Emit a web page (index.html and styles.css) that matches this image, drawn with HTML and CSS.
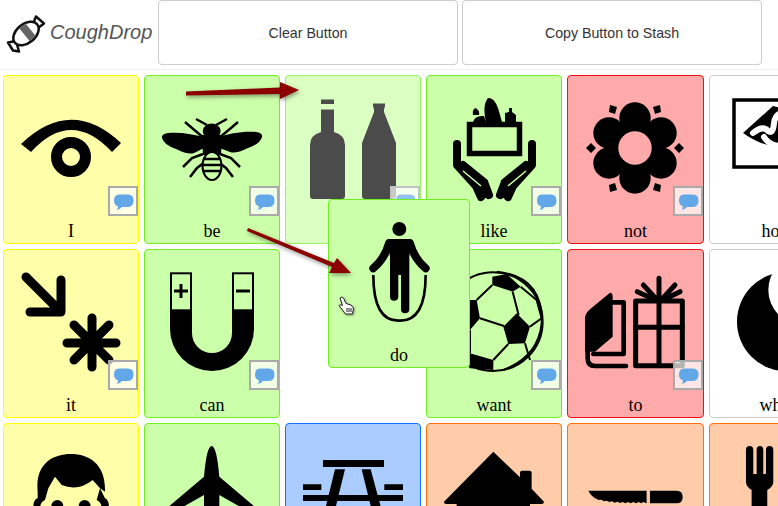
FILE: index.html
```html
<!DOCTYPE html>
<html lang="en">
<head>
    <meta charset="UTF-8">
    <meta name="viewport" content="width=device-width, initial-scale=1.0">
    <title>CoughDrop</title>
    <link rel="stylesheet" href="styles.css">
</head>
<body>
    <svg class="defs" width="0" height="0">
        <symbol id="bubble" viewBox="0 0 26 26">
            <path d="M9 6.5H18Q23.5 6.5 23.5 12.5Q23.5 19 18 19H12Q10 21.5 6.5 22Q8 20.5 8 18.5Q4 17 4 12.5Q4 6.5 9 6.5Z"/>
        </symbol>
    </svg>

    <header class="top-bar">
        <div class="logo">
            <svg class="logo-icon" width="48" height="48" viewBox="0 0 48 48">
                <path class="candy-line" d="M32 15L35 7.500L43 14.500L37 19Z"/>
                <path class="candy-line" d="M15 32L7 33.500L12 41.500L18 42.500Z"/>
                <ellipse class="candy-line" cx="25" cy="24.500" rx="14.500" ry="9.500" transform="rotate(-40 25 24.500)"/>
                <path class="candy-band" d="M18.400 19.600L24.500 14.500L34.700 26.900L28.600 32Z"/>
            </svg>
            <span class="logo-text">CoughDrop</span>
        </div>
        <button class="top-button">Clear Button</button>
        <button class="top-button">Copy Button to Stash</button>
    </header>

    <main class="board">
        <!-- row 1 -->
        <div class="cell yellow">
            <svg class="icon">
                <path d="M18 69Q68 21 118 68L109 77Q68 33 28 77Z"/>
                <circle class="ring" cx="68" cy="82" r="14.5"/>
            </svg>
            <span class="label">I</span>
            <div class="speak"><svg width="26" height="26"><use href="#bubble"/></svg></div>
        </div>
        <div class="cell green">
            <svg class="icon">
                <ellipse cx="67.700" cy="56" rx="9" ry="7.500"/>
                <path d="M58 60H78L77 80H59Z"/>
                <path d="M62 63C50 59 36 57 24 58Q17 59 18 63Q20 70 32 74Q44 80 50 78Q58 74 62 72Z"/>
                <path d="M73 63C85 58 100 56 112 57Q119 58 118 62Q116 69 104 73Q92 79 86 77Q78 74 73 72Z"/>
                <path class="bug-leg" d="M60 63L48 53L41 47M63 50L52 44M75 63L87 53L94 47M72 50L83 44M59 79L48 83L39 92M61 87L53 93L46 102M76 79L87 83L96 92M74 87L82 93L89 102"/>
                <ellipse class="bug-belly" cx="68" cy="91" rx="9.500" ry="14"/>
                <path class="bug-leg" d="M59 84H77M59 90H77M60 96H76"/>
            </svg>
            <span class="label">be</span>
            <div class="speak"><svg width="26" height="26"><use href="#bubble"/></svg></div>
        </div>
        <div class="cell green picked">
            <svg class="icon">
                <path d="M36 24.500H49V29H36ZM36 34.500H49V57Q60 60 60 70V121Q60 124 57 124H28Q25 124 25 121V70Q25 60 36 57Z"/>
                <path d="M88 28.500H100V31L99 34.500V37L111 68V121Q111 124 108 124H80Q77 124 77 121V68L89 37V34.500L88 31Z"/>
            </svg>
            <div class="speak"><svg width="26" height="26"><use href="#bubble"/></svg></div>
        </div>
        <div class="cell green">
            <svg class="icon">
                <rect class="crate" x="43.500" y="49.500" width="50" height="29"/>
                <path d="M60 47Q56 30 62 23Q68 22 72 33L76 47ZM79 47V38L83 37V33H86V37L90 40V47ZM47 47Q49 40 58 41L60 47ZM47 40Q46 34 50 33Q54 36 53 40Z"/>
                <path class="hand" d="M31 69V90L50 111L55 122M37 90L58 107L63 120M106 69V90L87 111L82 122M100 90L79 107L74 120"/>
                <path d="M48 108L62 105L63 123H52ZM89 108L75 105L74 123H85Z"/>
                <path class="hand-gap" d="M37 96L55 111M100 96L82 111"/>
            </svg>
            <span class="label">like</span>
            <div class="speak"><svg width="26" height="26"><use href="#bubble"/></svg></div>
        </div>
        <div class="cell red">
            <svg class="icon">
                <g transform="translate(1 0)">
                    <circle cx="67" cy="73" r="25"/>
                    <circle cx="67" cy="43" r="15.700"/>
                    <circle cx="67" cy="103" r="15.700"/>
                    <circle cx="41" cy="58" r="15.700"/>
                    <circle cx="93" cy="58" r="15.700"/>
                    <circle cx="41" cy="88" r="15.700"/>
                    <circle cx="93" cy="88" r="15.700"/>
                    <circle class="flower-hole" cx="67" cy="73" r="16.700"/>
                    <path d="M23 68L28 73L23 78L18 73ZM111 68L116 73L111 78L106 73ZM42 30L49 32L47 39L41 37ZM92 30L85 32L87 39L93 37ZM42 117L49 115L47 108L41 110ZM92 117L85 115L87 108L93 110Z"/>
                </g>
            </svg>
            <span class="label">not</span>
            <div class="speak"><svg width="26" height="26"><use href="#bubble"/></svg></div>
        </div>
        <div class="cell plain">
            <svg class="icon">
                <rect class="frame" x="25" y="25" width="86" height="67"/>
                <path d="M34 58L64 31L110 42V62Q70 84 34 58Z"/>
                <path class="squiggle" d="M44 58Q54 50 59 56Q64 60 65 48Q66 40 72 38M55 62Q60 70 70 71"/>
            </svg>
            <span class="label">how</span>
        </div>

        <!-- row 2 -->
        <div class="cell yellow">
            <svg class="icon">
                <path class="thick" d="M23 28L58 63M58 31V63H27"/>
                <path class="thick" d="M64 94H113M89 69V118M71 76L106 111M106 76L71 111"/>
            </svg>
            <span class="label">it</span>
            <div class="speak"><svg width="26" height="26"><use href="#bubble"/></svg></div>
        </div>
        <div class="cell green">
            <svg class="icon">
                <path d="M26 61H48V84A20 20 0 0 0 88 84V61H110V80A42 42 0 0 1 26 80Z"/>
                <rect class="pole" x="27" y="24.300" width="20" height="37"/>
                <rect class="pole" x="89" y="24.300" width="20" height="37"/>
                <path class="sign" d="M30 42H44M37 35V49M92 42H106"/>
            </svg>
            <span class="label">can</span>
            <div class="speak"><svg width="26" height="26"><use href="#bubble"/></svg></div>
        </div>
        <div class="cell-empty"></div>
        <div class="cell green">
            <svg class="icon">
                <g transform="translate(-146 -179) scale(.3333)">
                    <circle class="ball" cx="640" cy="755" r="148"/>
                    <path class="ball" d="M650 605Q790 620 785 760Q775 860 670 900"/>
                    <path d="M637 620L680 612L722 650L698 665L637 645ZM710 730L750 770L735 820L685 822L670 770ZM520 690L590 690L600 745L570 780L520 780ZM520 850L570 850L640 870L640 900L570 895Z"/>
                    <path class="ball" d="M637 645L590 690M698 665L716 735M600 745L672 768M750 770L785 745M722 650L770 690L785 745M735 820L750 870M685 822L640 870M570 780L570 850"/>
                </g>
            </svg>
            <span class="label">want</span>
            <div class="speak"><svg width="26" height="26"><use href="#bubble"/></svg></div>
        </div>
        <div class="cell red">
            <svg class="icon">
                <g transform="translate(-7 -179) scale(.3333)">
                    <path d="M150 668Q158 668 158 680V800L105 845H75V745Q75 730 90 718Z"/>
                    <path class="book" d="M158 697H191V852M83 840V865Q83 888 105 888H198M100 852H191"/>
                    <rect class="gift" x="227" y="693" width="140" height="194"/>
                    <path class="gift" d="M297 625V887M227 772H367M250 645L285 683M345 645L310 683M232 665L275 685M360 665L320 685"/>
                </g>
            </svg>
            <span class="label">to</span>
            <div class="speak"><svg width="26" height="26"><use href="#bubble"/></svg></div>
        </div>
        <div class="cell plain">
            <svg class="icon">
                <g transform="translate(-149 -179) scale(.3333)">
                    <circle cx="680" cy="755" r="149"/>
                    <circle class="moon-cut" cx="730" cy="660" r="105"/>
                </g>
            </svg>
            <span class="label">what</span>
        </div>

        <!-- row 3, cut off by the window -->
        <div class="cell yellow">
            <svg class="icon">
                <g transform="translate(-3 -3) scale(.3333)">
                    <path d="M113 215C105 130 160 102 212 102C270 102 318 135 315 215L300 205L278 180Q235 215 185 195L165 170L145 205L135 240Q122 245 120 262H100Q100 238 113 235ZM315 235Q327 240 327 262H305Q303 245 290 240L300 205Z"/>
                    <circle cx="172" cy="258" r="18"/>
                    <circle cx="254" cy="258" r="18"/>
                </g>
            </svg>
        </div>
        <div class="cell green">
            <svg class="icon">
                <g transform="translate(-144 -3) scale(.3333)">
                    <path d="M635 78Q650 78 658 170L790 282V300L658 225V400H612V225L480 300V282L612 170Q620 78 635 78Z"/>
                </g>
            </svg>
        </div>
        <div class="cell blue">
            <svg class="icon">
                <g transform="translate(-5 -23) scale(.3333)">
                    <path d="M129 180H312V201H129ZM69 253H124V270H69ZM313 253H369V270H313ZM69 285H369V303H69ZM165 208H195L165 330H135ZM245 208H272L305 330H275Z"/>
                </g>
            </svg>
        </div>
        <div class="cell orange">
            <svg class="icon">
                <g transform="translate(-146 -23) scale(.3333)">
                    <path d="M640 155L720 232V218Q720 212 726 212H749Q755 212 755 218V266L792 305Q792 312 785 312H750V400H530V312H498Q492 312 492 305Z"/>
                </g>
            </svg>
        </div>
        <div class="cell orange">
            <svg class="icon">
                <g transform="translate(-287 -23) scale(.3333)">
                    <path d="M925 272H1100V310L1090 306L1084 310L1076 306L1068 310L1060 306L1052 310L1044 306L1036 310L1028 306L1020 309L1012 305L1004 308L996 304L988 306L980 302L972 304L964 299L956 300Q935 292 925 272Z"/>
                    <path d="M1110 272H1190Q1208 272 1208 291Q1208 310 1190 310H1110Z"/>
                </g>
            </svg>
        </div>
        <div class="cell orange">
            <svg class="icon">
                <g transform="translate(-429 -23) scale(.3333)">
                    <path d="M1398 150Q1398 138 1409 138Q1420 138 1420 150V222H1430V150Q1430 138 1440 138Q1450 138 1450 150V222H1458V150Q1458 138 1469 138Q1480 138 1480 150V245Q1480 260 1462 270V400H1415V270Q1398 260 1398 245Z"/>
                </g>
            </svg>
        </div>
    </main>

    <!-- the button being dragged -->
    <div class="cell green ghost">
        <svg class="icon">
            <g transform="translate(-48 -129) scale(.3333)">
                <circle cx="358" cy="477" r="21"/>
                <path d="M322 507H394L388 560V718Q388 730 375 730Q363 730 363 718V615H355V680Q355 692 342 692Q330 692 330 680V560Z"/>
                <path class="arm" d="M327 520Q315 565 280 595M390 520Q402 565 437 595"/>
                <path class="rope" d="M280 615Q280 755 358 752Q437 755 437 615"/>
            </g>
        </svg>
        <span class="label">do</span>
    </div>

    <svg class="marks" width="778" height="506">
        <g class="arrow">
            <path d="M186 91.500L280 87.500V82L299 90L280 99V94L186 95.500Z"/>
            <path d="M248 228L334 263L337 258L351 273L329 273L332 267L247 231Z"/>
        </g>
        <g class="pointer">
            <path d="M340 298Q342 296 343.500 298L346 303.500L351 305L353.500 308L352.500 314H345.500L341 308L339 305.500Q340 304 342.500 305.500Z"/>
            <path d="M347 308V312M349 308V312M351 308V312"/>
        </g>
    </svg>
</body>
</html>
```

FILE: styles.css
```css
html, body {
    height: 506px;
    overflow: hidden;
}

body {
    margin: 0;
    position: relative;
    background-color: white;
    font-family: "Liberation Sans", Arial, sans-serif;
}

.defs {
    position: absolute;
}

.top-bar {
    display: flex;
    gap: 4px;
    height: 69px;
    border-bottom: 1px solid #eee;
}

.logo {
    display: flex;
    align-items: center;
    width: 154px;
    height: 65px;
}

.logo-icon {
    flex: none;
    margin-left: 1px;
    margin-right: 1px;
}

.candy-line {
    fill: white;
    stroke: #111;
    stroke-width: 2.5;
    stroke-linejoin: round;
}

.candy-band {
    fill: #666;
}

.logo-text {
    font-size: 20px;
    font-style: italic;
    color: #555;
}

.top-button {
    width: 300px;
    height: 65px;
    background-color: white;
    border: 1px solid #ccc;
    border-radius: 4px;
    font-family: "Liberation Sans", Arial, sans-serif;
    font-size: 14.2px;
    color: #333;
}

.board {
    display: grid;
    grid-template-columns: 136px 136px 136px 136px 137px 136px;
    grid-auto-rows: 169px;
    gap: 5px;
    padding: 5px 3px;
    width: 860px;
}

.cell {
    position: relative;
    display: flex;
    flex-direction: column;
    box-sizing: border-box;
    border: 1px solid #ccc;
    border-radius: 4px;
    background-color: white;
}

.yellow {
    background-color: #ffffaa;
    border-color: #ffff00;
}

.green {
    background-color: #ccffaa;
    border-color: #70f020;
}

.red {
    background-color: #ffaaaa;
    border-color: #ee1111;
}

.blue {
    background-color: #aaccff;
    border-color: #1170ff;
}

.orange {
    background-color: #ffccaa;
    border-color: #ff7011;
}

.picked {
    opacity: 0.7;
}

.icon {
    flex: none;
    width: 136px;
    height: 146px;
    margin: -1px 0 0 -1px;
}

.label {
    font-family: "Liberation Serif", "Times New Roman", serif;
    font-size: 18px;
    line-height: 20px;
    text-align: center;
    color: black;
}

.speak {
    position: absolute;
    right: 0;
    bottom: 27px;
    box-sizing: border-box;
    width: 30px;
    height: 30px;
    border: 2px solid #aaa;
    background-color: rgba(255, 255, 255, 0.7);
    fill: #62a8e8;
}

.speak svg {
    display: block;
}

.ghost {
    position: absolute;
    left: 328px;
    top: 199px;
    width: 142px;
    height: 169px;
}

.ghost .icon {
    width: 142px;
}

.marks {
    position: absolute;
    left: 0;
    top: 0;
    pointer-events: none;
}

.arrow {
    fill: #8b0000;
    filter: drop-shadow(1px 2px 2px rgba(0, 0, 0, 0.4));
}

.pointer {
    fill: white;
    stroke: #222;
    stroke-width: 1;
    filter: drop-shadow(1px 1px 1px rgba(0, 0, 0, 0.4));
}

/* icon pieces */
.ring {
    fill: none;
    stroke: black;
    stroke-width: 11;
}

.bug-leg {
    fill: none;
    stroke: black;
    stroke-width: 2.5;
}

.bug-belly {
    fill: #ccffaa;
    stroke: black;
    stroke-width: 2;
}

.crate {
    fill: none;
    stroke: black;
    stroke-width: 5.5;
}

.hand {
    fill: none;
    stroke: black;
    stroke-width: 8;
    stroke-linecap: round;
    stroke-linejoin: round;
}

.hand-gap {
    fill: none;
    stroke: #ccffaa;
    stroke-width: 1.5;
}

.flower-hole {
    fill: #ffaaaa;
}

.frame {
    fill: none;
    stroke: black;
    stroke-width: 3.5;
}

.squiggle {
    fill: none;
    stroke: white;
    stroke-width: 6;
    stroke-linecap: round;
}

.thick {
    fill: none;
    stroke: black;
    stroke-width: 9;
    stroke-linecap: round;
    stroke-linejoin: round;
}

.pole {
    fill: none;
    stroke: black;
    stroke-width: 2;
}

.sign {
    fill: none;
    stroke: black;
    stroke-width: 3;
}

.ball {
    fill: none;
    stroke: black;
    stroke-width: 6;
}

.book {
    fill: none;
    stroke: black;
    stroke-width: 14;
    stroke-linejoin: round;
    stroke-linecap: round;
}

.gift {
    fill: none;
    stroke: black;
    stroke-width: 15;
    stroke-linecap: round;
    stroke-linejoin: round;
}

.moon-cut {
    fill: white;
}

.arm {
    fill: none;
    stroke: black;
    stroke-width: 24;
    stroke-linecap: round;
}

.rope {
    fill: none;
    stroke: black;
    stroke-width: 8;
}
```
